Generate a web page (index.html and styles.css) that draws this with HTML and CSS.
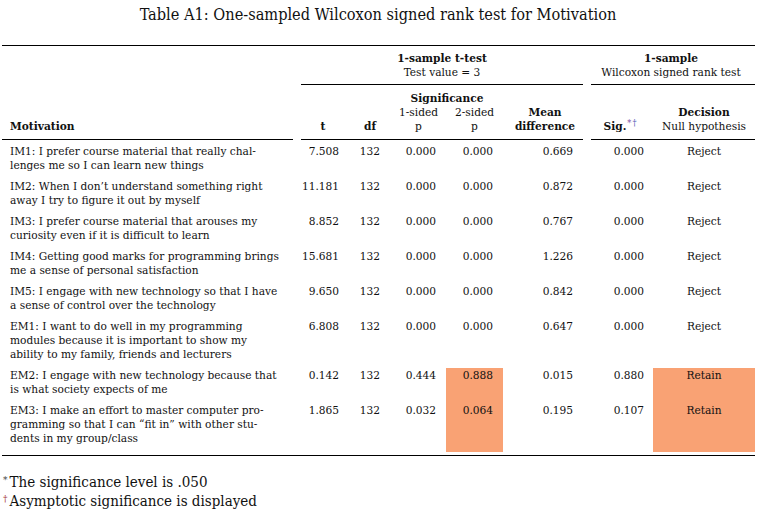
FILE: index.html
```html
<!DOCTYPE html>
<html>
<head>
<meta charset="utf-8">
<link rel="stylesheet" href="styles.css">
</head>
<body>
<div class="page">
  <div class="title">Table A1: One-sampled Wilcoxon signed rank test for Motivation</div>
  <table class="stats">
    <colgroup>
      <col class="c-mot"><col class="c-t"><col class="c-df"><col class="c-p1"><col class="c-p2"><col class="c-mean"><col class="c-sig"><col class="c-dec">
    </colgroup>
    <thead>
      <tr class="rule"><td colspan="8" class="full"><div class="line"></div></td></tr>
      <tr class="group">
        <th></th>
        <th colspan="5"><b>1-sample t-test</b><br>Test value = 3</th>
        <th colspan="2"><b>1-sample</b><br>Wilcoxon signed rank test</th>
      </tr>
      <tr class="rule">
        <td></td>
        <td colspan="5" class="trim"><div class="line"></div></td>
        <td colspan="2" class="trim-l"><div class="line"></div></td>
      </tr>
      <tr class="sub-a">
        <th rowspan="2" class="left"><b>Motivation</b></th>
        <th rowspan="2"><b>t</b></th>
        <th rowspan="2"><b>df</b></th>
        <th colspan="2" class="span"><b>Significance</b></th>
        <th rowspan="2"><b>Mean</b><br><b>difference</b></th>
        <th rowspan="2"><b>Sig.</b><sup class="m-star">*</sup><sup class="m-dag">†</sup></th>
        <th rowspan="2"><b>Decision</b><br>Null hypothesis</th>
      </tr>
      <tr class="sub-b">
        <th>1-sided<br>p</th>
        <th>2-sided<br>p</th>
      </tr>
      <tr class="rule mid">
        <td class="trim-r"><div class="line"></div></td>
        <td colspan="5" class="trim"><div class="line"></div></td>
        <td colspan="2" class="trim-l"><div class="line"></div></td>
      </tr>
    </thead>
    <tbody>
      <tr>
        <td class="item">IM1: I prefer course material that really chal-<br>lenges me so I can learn new things</td>
        <td class="n">7.508</td><td class="n df">132</td><td class="n">0.000</td><td class="n">0.000</td><td class="n mean">0.669</td><td class="n sig">0.000</td><td class="dec">Reject</td>
      </tr>
      <tr>
        <td class="item">IM2: When I don’t understand something right<br>away I try to figure it out by myself</td>
        <td class="n">11.181</td><td class="n df">132</td><td class="n">0.000</td><td class="n">0.000</td><td class="n mean">0.872</td><td class="n sig">0.000</td><td class="dec">Reject</td>
      </tr>
      <tr>
        <td class="item">IM3: I prefer course material that arouses my<br>curiosity even if it is difficult to learn</td>
        <td class="n">8.852</td><td class="n df">132</td><td class="n">0.000</td><td class="n">0.000</td><td class="n mean">0.767</td><td class="n sig">0.000</td><td class="dec">Reject</td>
      </tr>
      <tr>
        <td class="item">IM4: Getting good marks for programming brings<br>me a sense of personal satisfaction</td>
        <td class="n">15.681</td><td class="n df">132</td><td class="n">0.000</td><td class="n">0.000</td><td class="n mean">1.226</td><td class="n sig">0.000</td><td class="dec">Reject</td>
      </tr>
      <tr>
        <td class="item">IM5: I engage with new technology so that I have<br>a sense of control over the technology</td>
        <td class="n">9.650</td><td class="n df">132</td><td class="n">0.000</td><td class="n">0.000</td><td class="n mean">0.842</td><td class="n sig">0.000</td><td class="dec">Reject</td>
      </tr>
      <tr>
        <td class="item">EM1: I want to do well in my programming<br>modules because it is important to show my<br>ability to my family, friends and lecturers</td>
        <td class="n">6.808</td><td class="n df">132</td><td class="n">0.000</td><td class="n">0.000</td><td class="n mean">0.647</td><td class="n sig">0.000</td><td class="dec">Reject</td>
      </tr>
      <tr>
        <td class="item">EM2: I engage with new technology because that<br>is what society expects of me</td>
        <td class="n">0.142</td><td class="n df">132</td><td class="n">0.444</td><td class="n hl">0.888</td><td class="n mean">0.015</td><td class="n sig">0.880</td><td class="dec hl">Retain</td>
      </tr>
      <tr>
        <td class="item">EM3: I make an effort to master computer pro-<br>gramming so that I can “fit in” with other stu-<br>dents in my group/class</td>
        <td class="n">1.865</td><td class="n df">132</td><td class="n">0.032</td><td class="n hl">0.064</td><td class="n mean">0.195</td><td class="n sig">0.107</td><td class="dec hl">Retain</td>
      </tr>
    </tbody>
    <tfoot>
      <tr class="rule bottom"><td colspan="8" class="full"><div class="line"></div></td></tr>
    </tfoot>
  </table>
  <div class="notes">
    <div class="note"><span class="f-star">*</span>The significance level is .050</div>
    <div class="note"><span class="f-dag">†</span>Asymptotic significance is displayed</div>
  </div>
</div>
</body>
</html>
```

FILE: styles.css
```css
html, body {
  margin: 0;
  padding: 0;
  background: #ffffff;
}

body {
  font-family: "DejaVu Serif Condensed", "DejaVu Serif", serif;
  font-stretch: condensed;
  color: #111;
}

.page {
  width: 774px;
  height: 515px;
  padding-left: 2px;
  box-sizing: border-box;
}

.title {
  padding-top: 5px;
  height: 20px;
  line-height: 20px;
  margin-bottom: 20px;
  text-align: center;
  font-size: 16.2px;
  padding-right: 20px;
}

.stats {
  border-collapse: collapse;
  border-spacing: 0;
  table-layout: fixed;
  width: 753px;
  font-size: 11.8px;
  line-height: 14px;
}

.c-mot { width: 295px; }
.c-t { width: 52px; }
.c-df { width: 42px; }
.c-p1 { width: 55px; }
.c-p2 { width: 57px; }
.c-mean { width: 84px; }
.c-sig { width: 66px; }
.c-dec { width: 102px; }

.stats th,
.stats td {
  padding: 0;
  vertical-align: top;
}

.stats th {
  font-weight: normal;
  text-align: center;
}

.stats b {
  font-weight: bold;
}

.stats .rule td {
  padding: 0;
  height: 1px;
}

.rule .line {
  height: 1px;
  background: #000;
}

.stats .rule .trim { padding: 0 4px; }
.stats .rule .trim-l { padding-left: 4px; }
.stats .rule .trim-r { padding-right: 4px; }

.stats .rule.mid td {
  padding-bottom: 4px;
}

.stats .rule.bottom td {
  padding-top: 3px;
}

.stats .group th {
  padding: 5px 0 5px;
}

.stats .sub-a th {
  padding-top: 6px;
  vertical-align: bottom;
  padding-bottom: 6px;
}

.stats .sub-a th.span {
  padding-bottom: 0;
  vertical-align: top;
}

.stats .sub-b th {
  padding-bottom: 6px;
  vertical-align: bottom;
}

.stats .sub-a th.left {
  text-align: left;
  padding-left: 8px;
}

.m-star,
.m-dag {
  font-size: 9px;
  vertical-align: 4px;
  line-height: 0;
  font-weight: normal;
}

.m-star { color: #7d4fa3; margin-left: 1px; }
.m-dag { color: #3f4fae; margin-left: 1px; }

.stats tbody td {
  padding-bottom: 7px;
}

.stats tbody td.item {
  padding-left: 8px;
  white-space: nowrap;
}

.stats tbody td.n {
  text-align: right;
  padding-right: 10px;
}

.stats tbody td.df { padding-right: 11px; }
.stats tbody td.mean { padding-right: 14px; }
.stats tbody td.sig { padding-right: 9px; }

.stats tbody td.dec {
  text-align: center;
}

.stats tbody td.hl {
  background: #f9a274;
}

.notes {
  margin-top: 17px;
  font-size: 15px;
  line-height: 19px;
}

.note {
  display: flex;
  align-items: flex-start;
}

.f-star,
.f-dag {
  font-size: 10px;
  line-height: 13px;
  margin-right: 2px;
  margin-left: 1px;
}

.f-star { color: #444; }
.f-dag { color: #a23030; }
```
